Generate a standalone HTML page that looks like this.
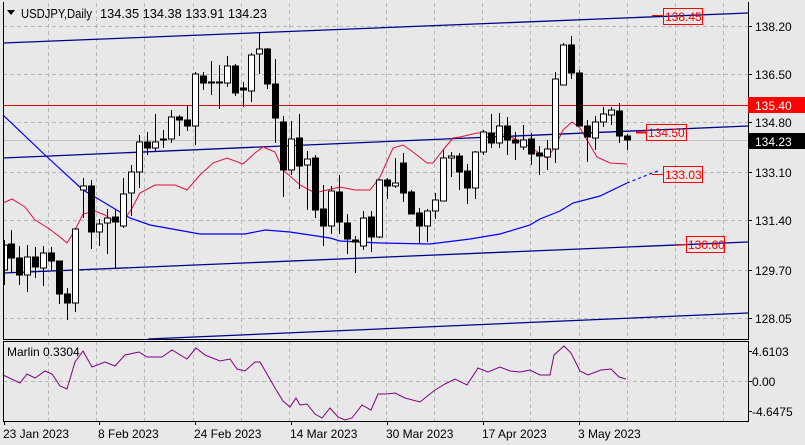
<!DOCTYPE html>
<html><head><meta charset="utf-8"><style>
html,body{margin:0;padding:0;background:#e8e8e8;}
svg{display:block;font-family:"Liberation Sans",sans-serif;}
</style></head><body>
<svg width="805" height="445" viewBox="0 0 805 445" xmlns="http://www.w3.org/2000/svg">
<rect width="805" height="445" fill="#e8e8e8"/>
<g stroke="#b8b8b8" stroke-width="1" stroke-dasharray="4,3" fill="none">
<path d="M48.5 3V339M96.5 3V339M144.5 3V339M193.5 3V339M241.5 3V339M289.5 3V339M337.5 3V339M386.5 3V339M434.5 3V339M482.5 3V339M530.5 3V339M579.5 3V339M627.5 3V339M675.5 3V339M723.5 3V339"/>
<path d="M48.5 341V421M96.5 341V421M144.5 341V421M193.5 341V421M241.5 341V421M289.5 341V421M337.5 341V421M386.5 341V421M434.5 341V421M482.5 341V421M530.5 341V421M579.5 341V421M627.5 341V421M675.5 341V421M723.5 341V421"/>
<path d="M3 26.5H748M3 74.5H748M3 122.5H748M3 172.5H748M3 220.5H748M3 270.5H748M3 318.5H748M3 381.5H748"/>
</g>
<line x1="3" y1="140.5" x2="748" y2="140.5" stroke="#c4c4c4"/>
<line x1="3" y1="105.5" x2="748" y2="105.5" stroke="#e00000"/>
<g stroke="#00008b" stroke-width="1.3" fill="none">
<line x1="3" y1="43" x2="748" y2="13"/>
<line x1="3" y1="158" x2="748" y2="126"/>
<line x1="3" y1="273" x2="748" y2="242"/>
<line x1="148" y1="339" x2="748" y2="313"/>
</g>
<polyline fill="none" stroke="#0000ff" stroke-width="1.2" points="3,115 45,155 83,190 100,200 130,218 150,225 200,234 245,234 265,230 290,232 330,238 340,241 380,243 430,244 470,239 500,234 530,225 540,219 560,211 573,203 600,196 627,183"/>
<line x1="627" y1="183" x2="660" y2="170" stroke="#0000ff" stroke-width="1.2" stroke-dasharray="3,3"/>
<polyline fill="none" stroke="#e0103a" stroke-width="1" points="3,203 12,199 25,207 35,220 48,228 60,237 67,243 75,230 83,214 95,211 105,215 115,222 123,221 131,210 140,193 155,185 175,185 187,190 200,175 213,163 227,158 243,164 255,153 263,147 275,152 283,170 300,185 315,193 323,191 340,187 355,190 370,190 380,177 393,148 403,145 413,152 427,163 433,163 443,150 453,138 460,137 477,133 500,133 513,138 527,145 547,158 555,147 563,130 572,122 580,128 587,140 597,157 610,163 627,164"/>
<g stroke="#000" stroke-width="1" shape-rendering="crispEdges">
<line x1="4.5" y1="240" x2="4.5" y2="285"/><rect x="4.5" y="245" width="3" height="25" fill="#fff"/>
<line x1="11.5" y1="230" x2="11.5" y2="272"/><rect x="8.5" y="244" width="6" height="14" fill="#000"/>
<line x1="19.5" y1="246" x2="19.5" y2="285"/><rect x="16.5" y="258" width="6" height="17" fill="#000"/>
<line x1="27.5" y1="245" x2="27.5" y2="292"/><rect x="24.5" y="257" width="6" height="18" fill="#fff"/>
<line x1="35.5" y1="247" x2="35.5" y2="278"/><rect x="32.5" y="257" width="6" height="10" fill="#000"/>
<line x1="43.5" y1="246" x2="43.5" y2="286"/><rect x="40.5" y="253" width="6" height="15" fill="#fff"/>
<line x1="51.5" y1="247" x2="51.5" y2="270"/><rect x="48.5" y="253" width="6" height="8" fill="#000"/>
<line x1="59.5" y1="261" x2="59.5" y2="304"/><rect x="56.5" y="261" width="6" height="33" fill="#000"/>
<line x1="67.5" y1="288" x2="67.5" y2="320"/><rect x="64.5" y="294" width="6" height="9" fill="#000"/>
<line x1="75.5" y1="228" x2="75.5" y2="312"/><rect x="72.5" y="229" width="6" height="74" fill="#fff"/>
<line x1="83.5" y1="178" x2="83.5" y2="218"/><rect x="80.5" y="186" width="6" height="4" fill="#fff"/>
<line x1="91.5" y1="180" x2="91.5" y2="249"/><rect x="88.5" y="186" width="6" height="46" fill="#000"/>
<line x1="99.5" y1="219" x2="99.5" y2="246"/><rect x="96.5" y="224" width="6" height="8" fill="#fff"/>
<line x1="107.5" y1="209" x2="107.5" y2="254"/><rect x="104.5" y="218" width="6" height="5" fill="#fff"/>
<line x1="115.5" y1="210" x2="115.5" y2="268"/><rect x="112.5" y="217" width="6" height="5" fill="#000"/>
<line x1="123.5" y1="178" x2="123.5" y2="228"/><rect x="120.5" y="194" width="6" height="32" fill="#fff"/>
<line x1="131.5" y1="165" x2="131.5" y2="216"/><rect x="128.5" y="172" width="6" height="21" fill="#fff"/>
<line x1="139.5" y1="135" x2="139.5" y2="188"/><rect x="136.5" y="142" width="6" height="30" fill="#fff"/>
<line x1="147.5" y1="132" x2="147.5" y2="155"/><rect x="144.5" y="142" width="6" height="6" fill="#000"/>
<line x1="155.5" y1="114" x2="155.5" y2="152"/><rect x="152.5" y="142" width="6" height="6" fill="#fff"/>
<line x1="163.5" y1="130" x2="163.5" y2="148"/><rect x="160.5" y="139" width="6" height="1" fill="#000"/>
<line x1="171.5" y1="110" x2="171.5" y2="143"/><rect x="168.5" y="117" width="6" height="22" fill="#fff"/>
<line x1="179.5" y1="115" x2="179.5" y2="136"/><rect x="176.5" y="117" width="6" height="3" fill="#000"/>
<line x1="187.5" y1="106" x2="187.5" y2="131"/><rect x="184.5" y="120" width="6" height="6" fill="#000"/>
<line x1="195.5" y1="72" x2="195.5" y2="145"/><rect x="192.5" y="74" width="6" height="52" fill="#fff"/>
<line x1="203.5" y1="72" x2="203.5" y2="90"/><rect x="200.5" y="76" width="6" height="7" fill="#000"/>
<line x1="211.5" y1="61" x2="211.5" y2="95"/><rect x="208.5" y="82" width="6" height="1" fill="#000"/>
<line x1="219.5" y1="65" x2="219.5" y2="109"/><rect x="216.5" y="82" width="6" height="1" fill="#000"/>
<line x1="227.5" y1="56" x2="227.5" y2="87"/><rect x="224.5" y="66" width="6" height="17" fill="#fff"/>
<line x1="235.5" y1="64" x2="235.5" y2="96"/><rect x="232.5" y="66" width="6" height="27" fill="#000"/>
<line x1="243.5" y1="82" x2="243.5" y2="107"/><rect x="240.5" y="88" width="6" height="2" fill="#000"/>
<line x1="251.5" y1="53" x2="251.5" y2="102"/><rect x="248.5" y="55" width="6" height="36" fill="#fff"/>
<line x1="259.5" y1="33" x2="259.5" y2="74"/><rect x="256.5" y="49" width="6" height="5" fill="#fff"/>
<line x1="267.5" y1="48" x2="267.5" y2="89"/><rect x="264.5" y="49" width="6" height="35" fill="#000"/>
<line x1="275.5" y1="59" x2="275.5" y2="143"/><rect x="272.5" y="84" width="6" height="34" fill="#000"/>
<line x1="283.5" y1="116" x2="283.5" y2="197"/><rect x="280.5" y="122" width="6" height="48" fill="#000"/>
<line x1="291.5" y1="121" x2="291.5" y2="175"/><rect x="288.5" y="139" width="6" height="31" fill="#fff"/>
<line x1="299.5" y1="114" x2="299.5" y2="189"/><rect x="296.5" y="138" width="6" height="28" fill="#000"/>
<line x1="307.5" y1="151" x2="307.5" y2="210"/><rect x="304.5" y="159" width="6" height="6" fill="#fff"/>
<line x1="315.5" y1="155" x2="315.5" y2="218"/><rect x="312.5" y="158" width="6" height="52" fill="#000"/>
<line x1="323.5" y1="185" x2="323.5" y2="246"/><rect x="320.5" y="209" width="6" height="17" fill="#000"/>
<line x1="331.5" y1="186" x2="331.5" y2="234"/><rect x="328.5" y="191" width="6" height="35" fill="#fff"/>
<line x1="339.5" y1="175" x2="339.5" y2="234"/><rect x="336.5" y="192" width="6" height="30" fill="#000"/>
<line x1="347.5" y1="214" x2="347.5" y2="254"/><rect x="344.5" y="223" width="6" height="16" fill="#000"/>
<line x1="355.5" y1="236" x2="355.5" y2="273"/><rect x="352.5" y="240" width="6" height="2" fill="#000"/>
<line x1="363.5" y1="211" x2="363.5" y2="250"/><rect x="360.5" y="218" width="6" height="28" fill="#fff"/>
<line x1="371.5" y1="211" x2="371.5" y2="252"/><rect x="368.5" y="217" width="6" height="20" fill="#000"/>
<line x1="379.5" y1="179" x2="379.5" y2="238"/><rect x="376.5" y="180" width="6" height="57" fill="#fff"/>
<line x1="387.5" y1="178" x2="387.5" y2="199"/><rect x="384.5" y="180" width="6" height="6" fill="#000"/>
<line x1="395.5" y1="158" x2="395.5" y2="188"/><rect x="392.5" y="183" width="6" height="3" fill="#fff"/>
<line x1="403.5" y1="153" x2="403.5" y2="202"/><rect x="400.5" y="163" width="6" height="30" fill="#000"/>
<line x1="411.5" y1="190" x2="411.5" y2="214"/><rect x="408.5" y="192" width="6" height="22" fill="#000"/>
<line x1="419.5" y1="208" x2="419.5" y2="243"/><rect x="416.5" y="213" width="6" height="13" fill="#000"/>
<line x1="427.5" y1="209" x2="427.5" y2="242"/><rect x="424.5" y="211" width="6" height="15" fill="#fff"/>
<line x1="435.5" y1="193" x2="435.5" y2="219"/><rect x="432.5" y="200" width="6" height="11" fill="#fff"/>
<line x1="443.5" y1="150" x2="443.5" y2="201"/><rect x="440.5" y="158" width="6" height="43" fill="#fff"/>
<line x1="451.5" y1="152" x2="451.5" y2="177"/><rect x="448.5" y="156" width="6" height="2" fill="#fff"/>
<line x1="459.5" y1="153" x2="459.5" y2="190"/><rect x="456.5" y="156" width="6" height="16" fill="#000"/>
<line x1="467.5" y1="164" x2="467.5" y2="204"/><rect x="464.5" y="171" width="6" height="17" fill="#000"/>
<line x1="475.5" y1="151" x2="475.5" y2="199"/><rect x="472.5" y="152" width="6" height="36" fill="#fff"/>
<line x1="483.5" y1="130" x2="483.5" y2="155"/><rect x="480.5" y="132" width="6" height="20" fill="#fff"/>
<line x1="491.5" y1="114" x2="491.5" y2="148"/><rect x="488.5" y="133" width="6" height="10" fill="#000"/>
<line x1="499.5" y1="113" x2="499.5" y2="148"/><rect x="496.5" y="126" width="6" height="17" fill="#fff"/>
<line x1="507.5" y1="117" x2="507.5" y2="155"/><rect x="504.5" y="126" width="6" height="14" fill="#000"/>
<line x1="515.5" y1="132" x2="515.5" y2="160"/><rect x="512.5" y="140" width="6" height="3" fill="#000"/>
<line x1="523.5" y1="125" x2="523.5" y2="150"/><rect x="520.5" y="140" width="6" height="7" fill="#fff"/>
<line x1="531.5" y1="133" x2="531.5" y2="165"/><rect x="528.5" y="139" width="6" height="15" fill="#000"/>
<line x1="539.5" y1="146" x2="539.5" y2="175"/><rect x="536.5" y="153" width="6" height="3" fill="#000"/>
<line x1="547.5" y1="140" x2="547.5" y2="170"/><rect x="544.5" y="149" width="6" height="8" fill="#fff"/>
<line x1="555.5" y1="72" x2="555.5" y2="163"/><rect x="552.5" y="79" width="6" height="70" fill="#fff"/>
<line x1="563.5" y1="43" x2="563.5" y2="85"/><rect x="560.5" y="45" width="6" height="40" fill="#fff"/>
<line x1="571.5" y1="36" x2="571.5" y2="79"/><rect x="568.5" y="45" width="6" height="28" fill="#000"/>
<line x1="579.5" y1="70" x2="579.5" y2="126"/><rect x="576.5" y="73" width="6" height="53" fill="#000"/>
<line x1="587.5" y1="120" x2="587.5" y2="162"/><rect x="584.5" y="126" width="6" height="11" fill="#000"/>
<line x1="595.5" y1="116" x2="595.5" y2="150"/><rect x="592.5" y="122" width="6" height="16" fill="#fff"/>
<line x1="603.5" y1="107" x2="603.5" y2="127"/><rect x="600.5" y="114" width="6" height="8" fill="#fff"/>
<line x1="611.5" y1="107" x2="611.5" y2="125"/><rect x="608.5" y="110" width="6" height="5" fill="#fff"/>
<line x1="619.5" y1="103" x2="619.5" y2="143"/><rect x="616.5" y="111" width="6" height="25" fill="#000"/>
<line x1="627.5" y1="134" x2="627.5" y2="150"/><rect x="624.5" y="136" width="6" height="4" fill="#000"/>
</g>
<g stroke="#ff0000" fill="none" stroke-width="1">
<line x1="652" y1="15.5" x2="663" y2="15.5"/><rect x="663.5" y="8.5" width="39" height="16"/>
<line x1="636" y1="132.5" x2="646" y2="132.5" stroke-width="2"/><rect x="646.5" y="124.5" width="40" height="16"/>
<line x1="652" y1="174.5" x2="663" y2="174.5"/><rect x="663.5" y="166.5" width="39" height="16"/>
<line x1="676" y1="244.5" x2="686" y2="244.5"/><rect x="686.5" y="236.5" width="38" height="16"/>
</g>
<g fill="#ff0000" font-size="12">
<text x="665" y="21">138.45</text>
<text x="648" y="137">134.50</text>
<text x="665" y="179">133.03</text>
<text x="688" y="249">130.60</text>
</g>
<polyline fill="none" stroke="#800080" stroke-width="1" points="3,375 20,383 27,374 35,378 45,371 52,374 60,386 67,389 75,362 83,351 92,367 105,362 115,366 125,355 139,352 147,357 162,357 172,350 187,359 196,348 205,355 220,361 230,359 237,369 245,371 255,362 260,362 267,374 275,388 283,401 290,407 296,398 300,405 307,404 315,414 322,418 330,408 338,417 345,420 352,418 362,405 371,410 378,394 386,394 395,393 405,398 420,402 435,390 445,384 455,379 467,385 478,368 488,372 500,367 510,371 520,372 530,370 540,375 550,375 554,355 564,346 571,353 580,371 588,375 601,370 611,369 619,377 626,379"/>
<g stroke="#000" fill="none" stroke-width="1" shape-rendering="crispEdges">
<path d="M3.5 2V339.5H748.5V2"/>
<rect x="3.5" y="341.5" width="745" height="80"/>
<path d="M748 26.5h4M748 74.5h4M748 122.5h4M748 172.5h4M748 220.5h4M748 270.5h4M748 318.5h4M748 351.5h4M748 381.5h4M748 411.5h4"/>
<path d="M4.5 421v4M99.5 421v4M195.5 421v4M291.5 421v4M387.5 421v4M483.5 421v4M579.5 421v4"/>
</g>
<g fill="#000" font-size="12">
<text x="755" y="31">138.20</text>
<text x="755" y="79">136.50</text>
<text x="755" y="127">134.80</text>
<text x="755" y="177">133.10</text>
<text x="755" y="225">131.40</text>
<text x="755" y="275">129.70</text>
<text x="755" y="323">128.05</text>
<text x="752" y="356">4.6103</text>
<text x="752" y="386">0.00</text>
<text x="752" y="416">-4.6475</text>
</g>
<rect x="748" y="97" width="57" height="16" fill="#ff0000"/>
<text x="755" y="110" fill="#fff" font-size="12">135.40</text>
<rect x="748" y="133" width="57" height="16" fill="#000"/>
<text x="755" y="146" fill="#fff" font-size="12">134.23</text>
<g fill="#000" font-size="12">
<text x="3" y="438">23 Jan 2023</text>
<text x="98" y="438">8 Feb 2023</text>
<text x="194" y="438">24 Feb 2023</text>
<text x="290" y="438">14 Mar 2023</text>
<text x="386" y="438">30 Mar 2023</text>
<text x="482" y="438">17 Apr 2023</text>
<text x="578" y="438">3 May 2023</text>
<text x="7" y="356">Marlin 0.3304</text>
</g>
<g fill="#000" font-size="13">
<text x="21" y="18" textLength="71" lengthAdjust="spacingAndGlyphs">USDJPY,Daily</text>
<text x="100" y="18" textLength="167" lengthAdjust="spacingAndGlyphs">134.35 134.38 133.91 134.23</text>
</g>
<polygon points="7,10 15,10 11,15" fill="#000"/>
</svg>
</body></html>
